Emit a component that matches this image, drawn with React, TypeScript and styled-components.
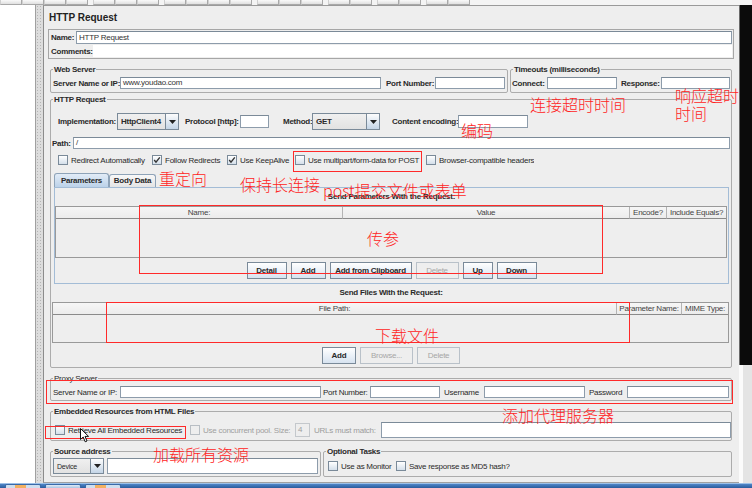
import React from 'react';
import styled, { createGlobalStyle } from 'styled-components';

const GlobalStyle = createGlobalStyle`
  html, body {
    margin: 0;
    padding: 0;
    background: #eeeeee;
  }
  body {
    font-family: "Liberation Sans", Arial, sans-serif;
    font-size: 8px;
    letter-spacing: -0.25px;
    color: #2a2a2a;
  }
`;

const Screen = styled.div`
  position: relative;
  width: 752px;
  height: 488px;
  overflow: hidden;
  display: flex;
  flex-direction: column;
  background: #eeeeee;
`;

const TopStrip = styled.div`
  height: 5px;
  flex: none;
  display: flex;
  gap: 5px;
  background: #f4f4f4;
`;

const ToolGroup = styled.div`
  display: flex;
`;

const ToolButton = styled.div`
  box-sizing: border-box;
  width: 22px;
  height: 5px;
  border: 1px solid #a8a8a8;
  border-top: none;
  border-left-color: #d0d0d0;
  background: linear-gradient(#fafafa, #e0e0e0);
`;

const Body = styled.div`
  flex: 1;
  display: flex;
  min-height: 0;
`;

const Tree = styled.div`
  width: 36px;
  flex: none;
  box-sizing: border-box;
  background: #ffffff;
  border-right: 1px solid #a0a0a0;
`;

const Splitter = styled.div`
  width: 7px;
  flex: none;
  background-color: #dddddd;
  background-image: radial-gradient(#b5b5b5 0.7px, transparent 0.9px);
  background-size: 3px 3px;
`;

const Main = styled.div`
  width: 696px;
  flex: none;
  box-sizing: border-box;
  border-left: 1px solid #8c8c8c;
  border-top: 1px solid #9a9a9a;
  border-bottom: 1px solid #a0a0a0;
  padding: 0 5px 0 4px;
  display: flex;
  flex-direction: column;
`;

const RightEdge = styled.div`
  flex: 1;
  display: flex;
  flex-direction: column;
`;

const EdgeDark = styled.div`
  height: 360px;
  background: #0b0b0b;
  border-left: 1px solid #6a6a6a;
`;

const EdgeLight = styled.div`
  flex: 1;
  background: linear-gradient(90deg, #fbfbfb 0 4px, #e4e4e4 4px);
`;

const Taskbar = styled.div`
  height: 5px;
  flex: none;
  box-sizing: border-box;
  display: flex;
  gap: 4px;
  padding-left: 5px;
  border-top: 1px solid #9cc0e8;
  background: linear-gradient(#4f86c8, #2a5c9c);
`;

const TaskButton = styled.div<{ $accent?: boolean }>`
  width: 34px;
  border: 1px solid #3a6aa8;
  border-bottom: none;
  border-radius: 2px 2px 0 0;
  background: ${(p) =>
    p.$accent
      ? 'linear-gradient(90deg, #cfdff0 0 9px, #f2b060 9px 20px, #cfdff0 20px)'
      : 'linear-gradient(#e2ecf7, #aac4e2)'};
`;

const Title = styled.div`
  height: 23px;
  line-height: 24px;
  padding-left: 1px;
  font-size: 10px;
  font-weight: bold;
  letter-spacing: 0;
  color: #222;
`;

const NameBlock = styled.div`
  border: 1px solid #a6a6a6;
  display: flex;
  flex-direction: column;
`;

const NameRow = styled.div`
  height: 14px;
  display: flex;
  align-items: center;
  padding: 0 1px 0 2px;
`;

const Label = styled.span<{ $w?: number; $ml?: number; $regular?: boolean; $dim?: boolean }>`
  flex: none;
  ${(p) => (p.$w ? `width: ${p.$w}px;` : '')}
  margin-left: ${(p) => p.$ml ?? 0}px;
  font-weight: ${(p) => (p.$regular ? 'normal' : 'bold')};
  color: ${(p) => (p.$dim ? '#9c9c9c' : '#2a2a2a')};
  white-space: nowrap;
`;

const Field = styled.div<{ $w?: number; $h?: number; $ml?: number; $disabled?: boolean; $plain?: boolean }>`
  box-sizing: border-box;
  height: ${(p) => p.$h ?? 12}px;
  ${(p) => (p.$w ? `width: ${p.$w}px; flex: none;` : 'flex: 1; min-width: 0;')}
  margin-left: ${(p) => p.$ml ?? 0}px;
  background: ${(p) => (p.$disabled ? '#eeeeee' : '#ffffff')};
  border: 1px solid ${(p) => (p.$plain ? '#ffffff' : p.$disabled ? '#c4c8cc' : '#8d9cab')};
  border-top-color: ${(p) => (p.$plain ? '#ffffff' : p.$disabled ? '#c4c8cc' : '#7b8a98')};
  padding: 0 2px;
  line-height: ${(p) => (p.$h ?? 12) - 2}px;
  color: ${(p) => (p.$disabled ? '#a0a0a0' : '#333')};
  white-space: nowrap;
  overflow: hidden;
`;

const GroupRow = styled.div<{ $mt: number }>`
  display: flex;
  gap: 2px;
  margin: ${(p) => p.$mt}px 2px 0;
`;

const Group = styled.fieldset<{ $w?: number; $grow?: boolean; $mt?: number; $pb?: number; $inline?: boolean }>`
  box-sizing: border-box;
  min-width: 0;
  margin: ${(p) => (p.$inline ? '0' : `${p.$mt ?? 0}px 2px 0`)};
  padding: 0 0 ${(p) => p.$pb ?? 3}px;
  border: 1px solid #acacac;
  border-radius: 2px;
  ${(p) => (p.$w ? `width: ${p.$w}px; flex: none;` : '')}
  ${(p) => (p.$grow ? 'flex: 1;' : '')}
`;

const Legend = styled.legend<{ $regular?: boolean }>`
  padding: 0 1px;
  margin-left: 2px;
  height: 9px;
  line-height: 9px;
  font-weight: ${(p) => (p.$regular ? 'normal' : 'bold')};
  color: #2a2a2a;
`;

const Row = styled.div<{ $h?: number; $mt?: number; $pl?: number; $pr?: number }>`
  display: flex;
  align-items: center;
  height: ${(p) => p.$h ?? 12}px;
  margin-top: ${(p) => p.$mt ?? 0}px;
  padding-left: ${(p) => p.$pl ?? 0}px;
  padding-right: ${(p) => p.$pr ?? 0}px;
`;

const Select = styled.div<{ $w: number; $h: number; $ml?: number }>`
  box-sizing: border-box;
  width: ${(p) => p.$w}px;
  height: ${(p) => p.$h}px;
  flex: none;
  margin-left: ${(p) => p.$ml ?? 0}px;
  display: flex;
  border: 1px solid #7a8a99;
  background: linear-gradient(#f0f0f0, #e2e2e2);
`;

const SelectValue = styled.span<{ $regular?: boolean }>`
  flex: 1;
  padding-left: 3px;
  align-self: center;
  font-weight: ${(p) => (p.$regular ? 'normal' : 'bold')};
  font-size: ${(p) => (p.$regular ? 7 : 8)}px;
  white-space: nowrap;
  overflow: hidden;
`;

const SelectArrow = styled.span`
  width: 12px;
  flex: none;
  border-left: 1px solid #7a8a99;
  background: linear-gradient(#fdfdfd, #c4d5e7);
  display: flex;
  align-items: center;
  justify-content: center;
`;

const CheckItem = styled.div<{ $w?: number; $dim?: boolean }>`
  display: flex;
  align-items: center;
  flex: none;
  ${(p) => (p.$w ? `width: ${p.$w}px;` : '')}
  color: ${(p) => (p.$dim ? '#a0a0a0' : '#2a2a2a')};
  white-space: nowrap;
  overflow: hidden;
`;

const Box = styled.span<{ $dim?: boolean }>`
  box-sizing: border-box;
  width: 10px;
  height: 10px;
  flex: none;
  margin-right: 3px;
  display: flex;
  align-items: center;
  justify-content: center;
  border: 1px solid ${(p) => (p.$dim ? '#b8bec4' : '#7a8a99')};
  background: ${(p) => (p.$dim ? '#eeeeee' : 'linear-gradient(#ffffff, #d4dfea)')};
`;

const TabStrip = styled.div`
  display: flex;
  align-items: flex-end;
  height: 14px;
  margin: 7px 0 0 3px;
`;

const Tab = styled.div<{ $active?: boolean; $w: number }>`
  box-sizing: border-box;
  width: ${(p) => p.$w}px;
  height: ${(p) => (p.$active ? 14 : 13)}px;
  border: 1px solid #8ea3b8;
  border-bottom: none;
  border-radius: 3px 3px 0 0;
  text-align: center;
  line-height: ${(p) => (p.$active ? 13 : 12)}px;
  font-weight: bold;
  background: ${(p) => (p.$active ? 'linear-gradient(#e2ecf7, #bcd2e9)' : 'linear-gradient(#f8f8f8, #e4e4e4)')};
`;

const TabPanel = styled.div`
  margin: 0 2px 0 3px;
  border: 1px solid #a3bcd6;
  padding: 0 0 4px;
`;

const Caption = styled.div<{ $h: number }>`
  height: ${(p) => p.$h}px;
  line-height: ${(p) => p.$h}px;
  text-align: center;
  font-weight: bold;
`;

const Table = styled.div<{ $cols: string; $body: number; $mx: string }>`
  display: grid;
  grid-template-columns: ${(p) => p.$cols};
  grid-template-rows: 12px ${(p) => p.$body}px;
  margin: ${(p) => p.$mx};
  border: 1px solid #999999;
`;

const HeadCell = styled.div`
  box-sizing: border-box;
  border-right: 1px solid #b4b4b4;
  border-bottom: 1px solid #8a8a8a;
  background: linear-gradient(#f6f6f6, #ececec);
  text-align: center;
  line-height: 11px;
  color: #444;
  white-space: nowrap;
  overflow: hidden;
  &:nth-last-child(2) {
    border-right: none;
  }
`;

const TableBody = styled.div`
  grid-column: 1 / -1;
  background: #eeeeee;
`;

const ButtonBar = styled.div`
  display: flex;
  justify-content: center;
  gap: 4px;
  margin-top: 4px;
`;

const Button = styled.div<{ $w: number; $disabled?: boolean }>`
  box-sizing: border-box;
  width: ${(p) => p.$w}px;
  height: 17px;
  border: 1px solid ${(p) => (p.$disabled ? '#b9c1c9' : '#7a8a99')};
  background: ${(p) => (p.$disabled ? '#eeeeee' : 'linear-gradient(#ffffff, #d7e3f0)')};
  color: ${(p) => (p.$disabled ? '#a6a6a6' : '#2a2a2a')};
  font-weight: ${(p) => (p.$disabled ? 'normal' : 'bold')};
  text-align: center;
  line-height: 15px;
  white-space: nowrap;
`;

const Note = styled.div<{ $x: number; $y: number }>`
  position: absolute;
  left: ${(p) => p.$x}px;
  top: ${(p) => p.$y}px;
  font-family: "Noto Sans CJK SC", sans-serif;
  font-size: 16px;
  font-weight: 300;
  line-height: 18px;
  letter-spacing: 0;
  color: #ff2424;
  white-space: nowrap;
  pointer-events: none;
`;

const Mark = styled.div<{ $x: number; $y: number; $w: number; $h: number }>`
  position: absolute;
  left: ${(p) => p.$x}px;
  top: ${(p) => p.$y}px;
  width: ${(p) => p.$w}px;
  height: ${(p) => p.$h}px;
  box-sizing: border-box;
  border: 1px solid #ff2a2a;
  pointer-events: none;
`;

const Pointer = styled.svg`
  position: absolute;
  left: 80px;
  top: 428px;
`;

const toolGroups = [4, 3, 4, 3, 2, 2, 2];

const Arrow = () => (
  <svg width="7" height="4" viewBox="0 0 7 4">
    <polygon points="0,0 7,0 3.5,4" fill="#222" />
  </svg>
);

const Tick = () => (
  <svg width="8" height="8" viewBox="0 0 8 8">
    <path d="M1.2 4 L3 6.2 L6.8 1.4" fill="none" stroke="#333" strokeWidth="1.4" />
  </svg>
);

const Check = ({ label, checked, dim, w }: { label: string; checked?: boolean; dim?: boolean; w?: number }) => (
  <CheckItem $w={w} $dim={dim}>
    <Box $dim={dim}>{checked && <Tick />}</Box>
    {label}
  </CheckItem>
);

const Combo = ({ value, w, h, ml, regular }: { value: string; w: number; h: number; ml?: number; regular?: boolean }) => (
  <Select $w={w} $h={h} $ml={ml}>
    <SelectValue $regular={regular}>{value}</SelectValue>
    <SelectArrow>
      <Arrow />
    </SelectArrow>
  </Select>
);

export default function App() {
  return (
    <Screen>
      <GlobalStyle />
      <TopStrip>
        {toolGroups.map((n, g) => (
          <ToolGroup key={g}>
            {Array.from({ length: n }).map((_, i) => (
              <ToolButton key={i} />
            ))}
          </ToolGroup>
        ))}
      </TopStrip>

      <Body>
        <Tree />
        <Splitter />
        <Main>
          <Title>HTTP Request</Title>

          <NameBlock>
            <NameRow>
              <Label $w={25}>Name:</Label>
              <Field $h={13}>HTTP Request</Field>
            </NameRow>
            <NameRow>
              <Label $w={42}>Comments:</Label>
              <Field $plain />
            </NameRow>
          </NameBlock>

          <GroupRow $mt={6}>
            <Group $w={458} $inline>
              <Legend>Web Server</Legend>
              <Row $mt={3} $pl={2} $pr={2}>
                <Label $w={67}>Server Name or IP:</Label>
                <Field>www.youdao.com</Field>
                <Label $w={49} $ml={5}>Port Number:</Label>
                <Field $w={70} />
              </Row>
            </Group>
            <Group $grow $inline>
              <Legend>Timeouts (milliseconds)</Legend>
              <Row $mt={3} $pl={1} $pr={1}>
                <Label $w={35}>Connect:</Label>
                <Field $w={70} />
                <Label $w={40} $ml={4}>Response:</Label>
                <Field />
              </Row>
            </Group>
          </GroupRow>

          <Group $mt={2}>
            <Legend>HTTP Request</Legend>
            <Row $h={17} $mt={9} $pl={7}>
              <Label $w={59}>Implementation:</Label>
              <Combo value="HttpClient4" w={62} h={17} />
              <Label $w={55} $ml={6}>Protocol [http]:</Label>
              <Field $w={29} $h={13} />
              <Label $w={29} $ml={14}>Method:</Label>
              <Combo value="GET" w={68} h={17} />
              <Label $w={66} $ml={12}>Content encoding:</Label>
              <Field $w={70} $h={13} />
            </Row>
            <Row $mt={7} $pl={1} $pr={1}>
              <Label $w={21}>Path:</Label>
              <Field>/</Field>
            </Row>
            <Row $mt={5} $pl={7}>
              <Check w={94} label="Redirect Automatically" />
              <Check w={75} checked label="Follow Redirects" />
              <Check w={68} checked label="Use KeepAlive" />
              <Check w={131} label="Use multipart/form-data for POST" />
              <Check label="Browser-compatible headers" />
            </Row>

            <TabStrip>
              <Tab $w={55} $active>Parameters</Tab>
              <Tab $w={47}>Body Data</Tab>
            </TabStrip>
            <TabPanel>
              <Caption $h={17}>Send Parameters With the Request:</Caption>
              <Table $cols="287px 287px 37px 1fr" $body={38} $mx="1px 1px 0 0">
                <HeadCell>Name:</HeadCell>
                <HeadCell>Value</HeadCell>
                <HeadCell>Encode?</HeadCell>
                <HeadCell>Include Equals?</HeadCell>
                <TableBody />
              </Table>
              <ButtonBar>
                <Button $w={40}>Detail</Button>
                <Button $w={35}>Add</Button>
                <Button $w={82}>Add from Clipboard</Button>
                <Button $w={43} $disabled>Delete</Button>
                <Button $w={30}>Up</Button>
                <Button $w={40}>Down</Button>
              </ButtonBar>
            </TabPanel>

            <Caption $h={18}>Send Files With the Request:</Caption>
            <Table $cols="1fr 65px 46px" $body={27} $mx="0 2px 0 1px">
              <HeadCell>File Path:</HeadCell>
              <HeadCell>Parameter Name:</HeadCell>
              <HeadCell>MIME Type:</HeadCell>
              <TableBody />
            </Table>
            <ButtonBar>
              <Button $w={34}>Add</Button>
              <Button $w={53} $disabled>Browse...</Button>
              <Button $w={43} $disabled>Delete</Button>
            </ButtonBar>
          </Group>

          <Group $mt={6} $pb={2}>
            <Legend $regular>Proxy Server</Legend>
            <Row $mt={3} $pl={2} $pr={2}>
              <Label $w={67} $regular>Server Name or IP:</Label>
              <Field $w={201} />
              <Label $w={47} $ml={2} $regular>Port Number:</Label>
              <Field $w={70} />
              <Label $w={40} $ml={4} $regular>Username</Label>
              <Field $w={101} />
              <Label $w={38} $ml={4} $regular>Password</Label>
              <Field />
            </Row>
          </Group>

          <Group $mt={6} $pb={2}>
            <Legend>Embedded Resources from HTML Files</Legend>
            <Row $h={16} $mt={6} $pl={4}>
              <Check w={135} label="Retrieve All Embedded Resources" />
              <Check w={105} dim label="Use concurrent pool. Size:" />
              <Field $w={15} $h={14} $disabled>4</Field>
              <Label $w={67} $ml={4} $regular $dim>URLs must match:</Label>
              <Field $h={16} />
            </Row>
          </Group>

          <GroupRow $mt={6}>
            <Group $w={271} $inline $pb={2}>
              <Legend>Source address</Legend>
              <Row $h={16} $mt={2} $pl={2} $pr={2}>
                <Combo value="Device" w={51} h={16} regular />
                <Field $h={16} $ml={3} />
              </Row>
            </Group>
            <Group $grow $inline $pb={2}>
              <Legend>Optional Tasks</Legend>
              <Row $h={16} $mt={2} $pl={4}>
                <Check w={68} label="Use as Monitor" />
                <Check label="Save response as MD5 hash?" />
              </Row>
            </Group>
          </GroupRow>
        </Main>
        <RightEdge>
          <EdgeDark />
          <EdgeLight />
        </RightEdge>
      </Body>

      <Taskbar>
        <TaskButton $accent />
        <TaskButton />
        <TaskButton $accent />
      </Taskbar>

      <Mark $x={293} $y={151} $w={129} $h={21} />
      <Mark $x={139} $y={205} $w={464} $h={69} />
      <Mark $x={106} $y={302} $w={524} $h={41} />
      <Mark $x={46} $y={380} $w={687} $h={24} />
      <Mark $x={45} $y={426} $w={141} $h={13} />

      <Note $x={530} $y={95}>连接超时时间</Note>
      <Note $x={675} $y={86}>
        响应超时
        <br />
        时间
      </Note>
      <Note $x={461} $y={121}>编码</Note>
      <Note $x={159} $y={169}>重定向</Note>
      <Note $x={240} $y={175}>保持长连接</Note>
      <Note $x={323} $y={181}>post提交文件或表单</Note>
      <Note $x={367} $y={229}>传参</Note>
      <Note $x={375} $y={326}>下载文件</Note>
      <Note $x={502} $y={406}>添加代理服务器</Note>
      <Note $x={153} $y={445}>加载所有资源</Note>

      <Pointer width="10" height="15" viewBox="0 0 10 15">
        <path d="M0.5 0.5 L0.5 11.5 L3.2 9 L5.2 13.8 L7 13 L5 8.4 L8.6 8.4 Z" fill="#fff" stroke="#111" strokeWidth="1" />
      </Pointer>
    </Screen>
  );
}
